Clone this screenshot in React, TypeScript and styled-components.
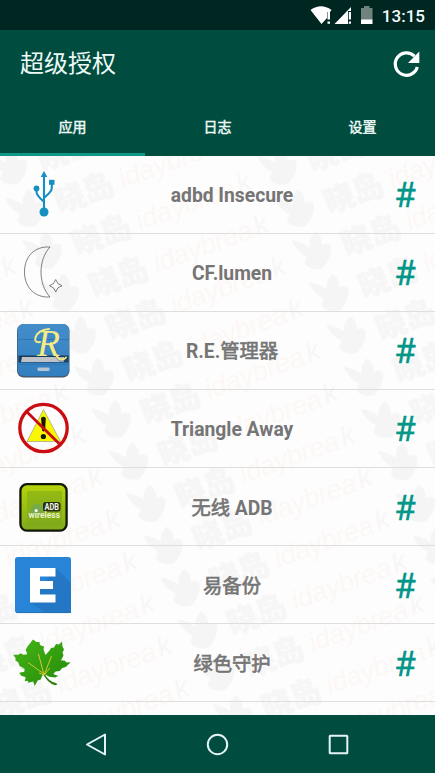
import React from "react";
import styled, { createGlobalStyle } from "styled-components";

const sans = `Roboto, "Noto Sans CJK SC", sans-serif`;

const GlobalStyle = createGlobalStyle`
  * { box-sizing: border-box; }
  html, body { margin: 0; padding: 0; }
  body { font-family: ${sans}; background: #fdfdfd; overflow: hidden; }
`;

const Screen = styled.div`
  width: 435px;
  height: 773px;
  display: grid;
  grid-template-rows: 30px 125.5px 1fr 58px;
  overflow: hidden;
`;

const StatusBar = styled.div`
  display: flex;
  align-items: center;
  justify-content: flex-end;
  padding-right: 10px;
  background: #002621;
  color: #f4fbfa;
`;

const StatusIcons = styled.svg`
  width: 68px;
  height: 30px;
  margin-right: 5px;
`;

const Clock = styled.span`
  font-size: 17px;
  font-weight: 500;
  line-height: 30px;
  padding-top: 2px;
`;

const Header = styled.header`
  display: flex;
  flex-direction: column;
  background: #004d40;
  color: #eefaf7;
`;

const TitleRow = styled.div`
  flex: 1;
  display: flex;
  align-items: center;
  justify-content: space-between;
  padding: 0 14px 0 20px;
`;

const Title = styled.h1`
  margin: 0;
  font-size: 24px;
  font-weight: 400;
  line-height: 36px;
`;

const RefreshIcon = styled.svg`
  width: 30px;
  height: 30px;
`;

const Tabs = styled.nav`
  height: 57px;
  display: grid;
  grid-template-columns: repeat(3, 1fr);
`;

const Tab = styled.div<{ $active?: boolean }>`
  display: flex;
  align-items: center;
  justify-content: center;
  font-size: 14px;
  font-weight: 400;
  -webkit-text-stroke: 0.45px currentColor;
  border-bottom: 3px solid ${(p) => (p.$active ? "#109785" : "transparent")};
`;

const List = styled.main`
  position: relative;
  overflow: hidden;
  background: #fdfdfd;
`;

const Watermark = styled.svg`
  position: absolute;
  inset: 0;
  width: 100%;
  height: 100%;
`;

const Row = styled.div`
  position: relative;
  height: 78.15px;
  display: grid;
  grid-template-columns: 86px 1fr 58px;
  align-items: center;
  border-bottom: 1px solid #dedede;
`;

const IconCell = styled.div`
  display: flex;
  justify-content: center;
  svg { width: 60px; height: 60px; display: block; }
`;

const Name = styled.div`
  text-align: center;
  padding: 4px 0 0 1px;
  font-size: 19.3px;
  font-weight: 700;
  line-height: 28px;
  color: #757575;
`;

const Han = styled.span`
  font-weight: 400;
  -webkit-text-stroke: 0.65px currentColor;
`;

const Hash = styled.div`
  text-align: center;
  padding: 4px 2px 0 0;
  font-size: 35px;
  line-height: 40px;
  color: #009688;
  -webkit-text-stroke: 0.3px currentColor;
`;

const NavBar = styled.footer`
  display: flex;
  align-items: center;
  justify-content: center;
  gap: 90px;
  background: #004d40;
  svg { width: 31px; height: 31px; }
`;

const UsbIcon = () => (
  <svg viewBox="0 0 60 60">
    <g fill="none" stroke="#168fc3" strokeWidth="2.1">
      <path d="M31 12V49M23.500 24v4q0 3 3 5.500l4.500 4.500M38.800 18v6q0 3-3 5.500l-4.800 4.500" />
    </g>
    <g fill="#168fc3">
      <path d="M31 7l3.300 6h-6.600z" />
      <circle cx="23.500" cy="24.500" r="2.900" />
      <rect x="36" y="15.800" width="5.500" height="5" />
      <circle cx="31" cy="48" r="4.500" />
    </g>
  </svg>
);

const MoonIcon = () => (
  <svg viewBox="0 0 60 60" fill="none" stroke="#555" strokeWidth=".75">
    <path d="M37 5C22 4 11.500 14 11.500 30s11 26 25.500 25C25 42 25 18 37 5z" />
    <path d="M42.700 37.500q1.200 5 6.300 6.200q-5.100 1.200-6.300 6.300q-1.200-5.100-6.300-6.300q5.100-1.200 6.300-6.200z" />
  </svg>
);

const ExplorerIcon = () => (
  <svg viewBox="0 0 60 60">
    <defs>
      <linearGradient id="drawer" x2="0" y2="1">
        <stop stopColor="#438dc9" />
        <stop offset="1" stopColor="#327fc0" />
      </linearGradient>
    </defs>
    <rect x="4" y="4" width="52.500" height="53.500" rx="6.500" fill="#405b73" />
    <rect x="4.700" y="4" width="51.300" height="52" rx="6" fill="url(#drawer)" />
    <path d="M5 19.500h51M5 44.500h51" stroke="#2d72ad" strokeWidth=".8" />
    <rect x="5.500" y="35.500" width="50" height="7" fill="#173c5c" />
    <path d="M9 37h42v5H8z" fill="#bfc2c6" />
    <rect x="24.500" y="47.500" width="12" height="3.500" rx="1" fill="#b5c4d3" />
    <path d="M40 27q4 12 9 13.500q3 1 4-1.500" stroke="#32607f" strokeWidth="4" fill="none" opacity=".4" />
    <text x="24" y="35.500" fontFamily="'Liberation Serif', serif" fontStyle="italic" fontSize="38" textLength="23" lengthAdjust="spacingAndGlyphs" fill="#f4eb86">R</text>
    <path d="M27 22q-6 1-4.500-4.500Q25 10 36 9M38 23q4 15 10 16.500q3 .5 5-2" fill="none" stroke="#f4eb86" strokeWidth="2" strokeLinecap="round" />
  </svg>
);

const TriangleIcon = () => (
  <svg viewBox="0 0 60 60">
    <path d="M30.500 11.500L47.500 43.500H14z" fill="#f9f800" stroke="#aaa88b" strokeWidth=".8" strokeLinejoin="round" />
    <path d="M28 20q2.500-2.500 4.800 0l-.7 12.500q-1.600 2-3 0z" fill="#171700" />
    <circle cx="30.400" cy="38.500" r="2.600" fill="#171700" />
    <g fill="none" stroke="#c90d12">
      <circle cx="30.500" cy="30" r="23.700" strokeWidth="3.300" />
      <path d="M13.500 13.500l34 33.500" strokeWidth="2.800" />
    </g>
  </svg>
);

const WirelessIcon = () => (
  <svg viewBox="0 0 60 60">
    <defs>
      <linearGradient id="lime" x2="0" y2="1">
        <stop stopColor="#b7d40b" />
        <stop offset="1" stopColor="#80a91d" />
      </linearGradient>
    </defs>
    <rect x="7.400" y="7.200" width="46.200" height="46.400" rx="6.500" fill="url(#lime)" stroke="#111806" strokeWidth="2.300" />
    <rect x="14" y="14" width="35" height="35" fill="#79a51a" opacity=".5" />
    <path d="M18 38a6 8 0 1 1 12-6v7z" fill="#73a857" opacity=".8" />
    <rect x="30" y="25" width="17.500" height="9.500" rx="2.500" fill="#263011" />
    <g fontFamily="Roboto, sans-serif" fontWeight="700">
      <text x="31.500" y="33" fontSize="9" textLength="14.500" lengthAdjust="spacingAndGlyphs" fill="#f4f7e8">ADB</text>
      <text x="15.500" y="41.300" fontSize="9" textLength="31.500" lengthAdjust="spacingAndGlyphs" fill="#eaf3cd">wireless</text>
    </g>
    <circle cx="23.200" cy="33.500" r="1.500" fill="#fff" />
  </svg>
);

const BackupIcon = () => (
  <svg viewBox="0 0 60 60">
    <rect x="2" y="2" width="56" height="56" rx="2.800" fill="#2884d6" />
    <path d="M42.500 13l15.500 15v30H33L17 47.500z" fill="#2477c5" />
    <path d="M17 13h25.500v8.500H27v4.500h13v8H27v5.500h15.500v8H17z" fill="#fff" />
    <path d="M3.500 57.600h53" stroke="#236eae" strokeWidth=".8" />
  </svg>
);

const LeafIcon = () => (
  <svg viewBox="0 0 60 60">
    <defs>
      <linearGradient id="leaf" x2="1" y2="1">
        <stop stopColor="#47b618" />
        <stop offset="1" stopColor="#218907" />
      </linearGradient>
    </defs>
    <path d="M31 40q5 9 12 10l1.500 1.500-2.500.7Q34 50 29 39z" fill="#30800d" />
    <path d="M20 6.500L23.500 9l3 0 .5 3 4 1.500-.5 3 2 5.500 4-4.500 1.500-2.500 3-.5 2-3.500 3 .5 3-3 .5 5 1.500 3-1.500 3 1 3-2.500 5 3.500 0 2 2 4.200-.2-5 4.700-3.500 1-2.500 3-4 .5-2.500 2.500 5 2-3 1.500-6-.7-3.500-2-3.200.5-1.800 4.200-3 1-3 5.500-1.500-4.500-5 1.200-.5-2-3 .5 1-4-4.500-1.500-2-3 5-1 .5-3-4.500 0 4-.5-4.500-2-1.500-4-3-2 .5-2-2.500-3.500 5 0 2.500-1.500 2.500 1.500 4-.5-1.500-4.500 2-3.500z" fill="url(#leaf)" />
    <path d="M31 42L25.500 21M31.500 41l7-18M31 41L15 29.500M31 42l6-7M31 42l-5-2" fill="none" stroke="#d8c632" strokeWidth="1" />
  </svg>
);

const WatermarkLayer = () => (
  <Watermark aria-hidden="true">
    <defs>
      <pattern id="mark" width="250" height="45.600" patternUnits="userSpaceOnUse" patternTransform="matrix(.94 -.336 .379 .925 -5 41)">
        <path d="M9 4q9 5 14 13q1-9 11-13q5 7 1 15q7-1 8 4q-2 10-16 18q-14-2-15-11q2-4 5-5q-9-10-8-21z" fill="#f5f5f6" />
        <text x="54" y="37" fontSize="30" fontWeight="900" fontFamily="'Noto Sans CJK SC', sans-serif" fill="#f6f6f7" stroke="#f6f6f7" strokeWidth=".8">晓岛</text>
        <text x="122" y="35" fontSize="28" fontStyle="italic" fontFamily="'Liberation Sans', sans-serif" textLength="104" fill="#fcf7f5">idaybrea</text>
        <text x="229" y="34" fontSize="28" fontStyle="italic" fontFamily="'Liberation Sans', sans-serif" fill="#f8f5f5">k</text>
      </pattern>
    </defs>
    <rect width="100%" height="100%" fill="url(#mark)" />
  </Watermark>
);

const apps = [
  { name: "adbd Insecure", Icon: UsbIcon },
  { name: "CF.lumen", Icon: MoonIcon },
  { name: <>R.E.<Han>管理器</Han></>, Icon: ExplorerIcon },
  { name: "Triangle Away", Icon: TriangleIcon },
  { name: <><Han>无线</Han> ADB</>, Icon: WirelessIcon },
  { name: <Han>易备份</Han>, Icon: BackupIcon },
  { name: <Han>绿色守护</Han>, Icon: LeafIcon },
];

export default function App() {
  return (
    <>
      <GlobalStyle />
      <Screen>
        <StatusBar>
          <StatusIcons viewBox="310 0 68 30">
            <path d="M311.500 10q10.500-7.500 21 0l-1.500 2h-3v6l-5.500 6z" fill="#fff" />
            <path d="M328.500 12h2.500v7.500h-2.500zM328.500 21.500h2.500v2.300h-2.500z" fill="#fff" />
            <path d="M335.500 24L352 7v4h-3v13z" fill="#fff" />
            <path d="M349.800 12h2.200v7.500h-2.200zM349.800 21.500h2.200v2.300h-2.200z" fill="#fff" />
            <path d="M362 8h3V6h5.500v2h3v12H362z" fill="#71827e" />
            <path d="M362 19.500h11.500v4.500H362z" fill="#fff" />
          </StatusIcons>
          <Clock>13:15</Clock>
        </StatusBar>
        <Header>
          <TitleRow>
            <Title>超级授权</Title>
            <RefreshIcon viewBox="0 0 30 30">
              <path d="M23.500 7.200A11.200 11.200 0 1 0 26.300 18" fill="none" stroke="#fff" strokeWidth="3.200" />
              <path d="M28.300 2.500v11.500H17z" fill="#fff" />
            </RefreshIcon>
          </TitleRow>
          <Tabs>
            <Tab $active>应用</Tab>
            <Tab>日志</Tab>
            <Tab>设置</Tab>
          </Tabs>
        </Header>
        <List>
          <WatermarkLayer />
          {apps.map(({ name, Icon }, index) => (
            <Row key={index}>
              <IconCell><Icon /></IconCell>
              <Name>{name}</Name>
              <Hash>#</Hash>
            </Row>
          ))}
        </List>
        <NavBar>
          <svg viewBox="0 0 31 31"><path d="M6 15.500L24 5.500v20z" fill="none" stroke="#e5f4f2" strokeWidth="2" strokeLinejoin="round" /></svg>
          <svg viewBox="0 0 31 31"><circle cx="15.500" cy="15.500" r="9.700" fill="none" stroke="#e5f4f2" strokeWidth="2" /></svg>
          <svg viewBox="0 0 31 31"><rect x="6.700" y="6.700" width="17.600" height="17.600" rx=".5" fill="none" stroke="#e5f4f2" strokeWidth="2" /></svg>
        </NavBar>
      </Screen>
    </>
  );
}
